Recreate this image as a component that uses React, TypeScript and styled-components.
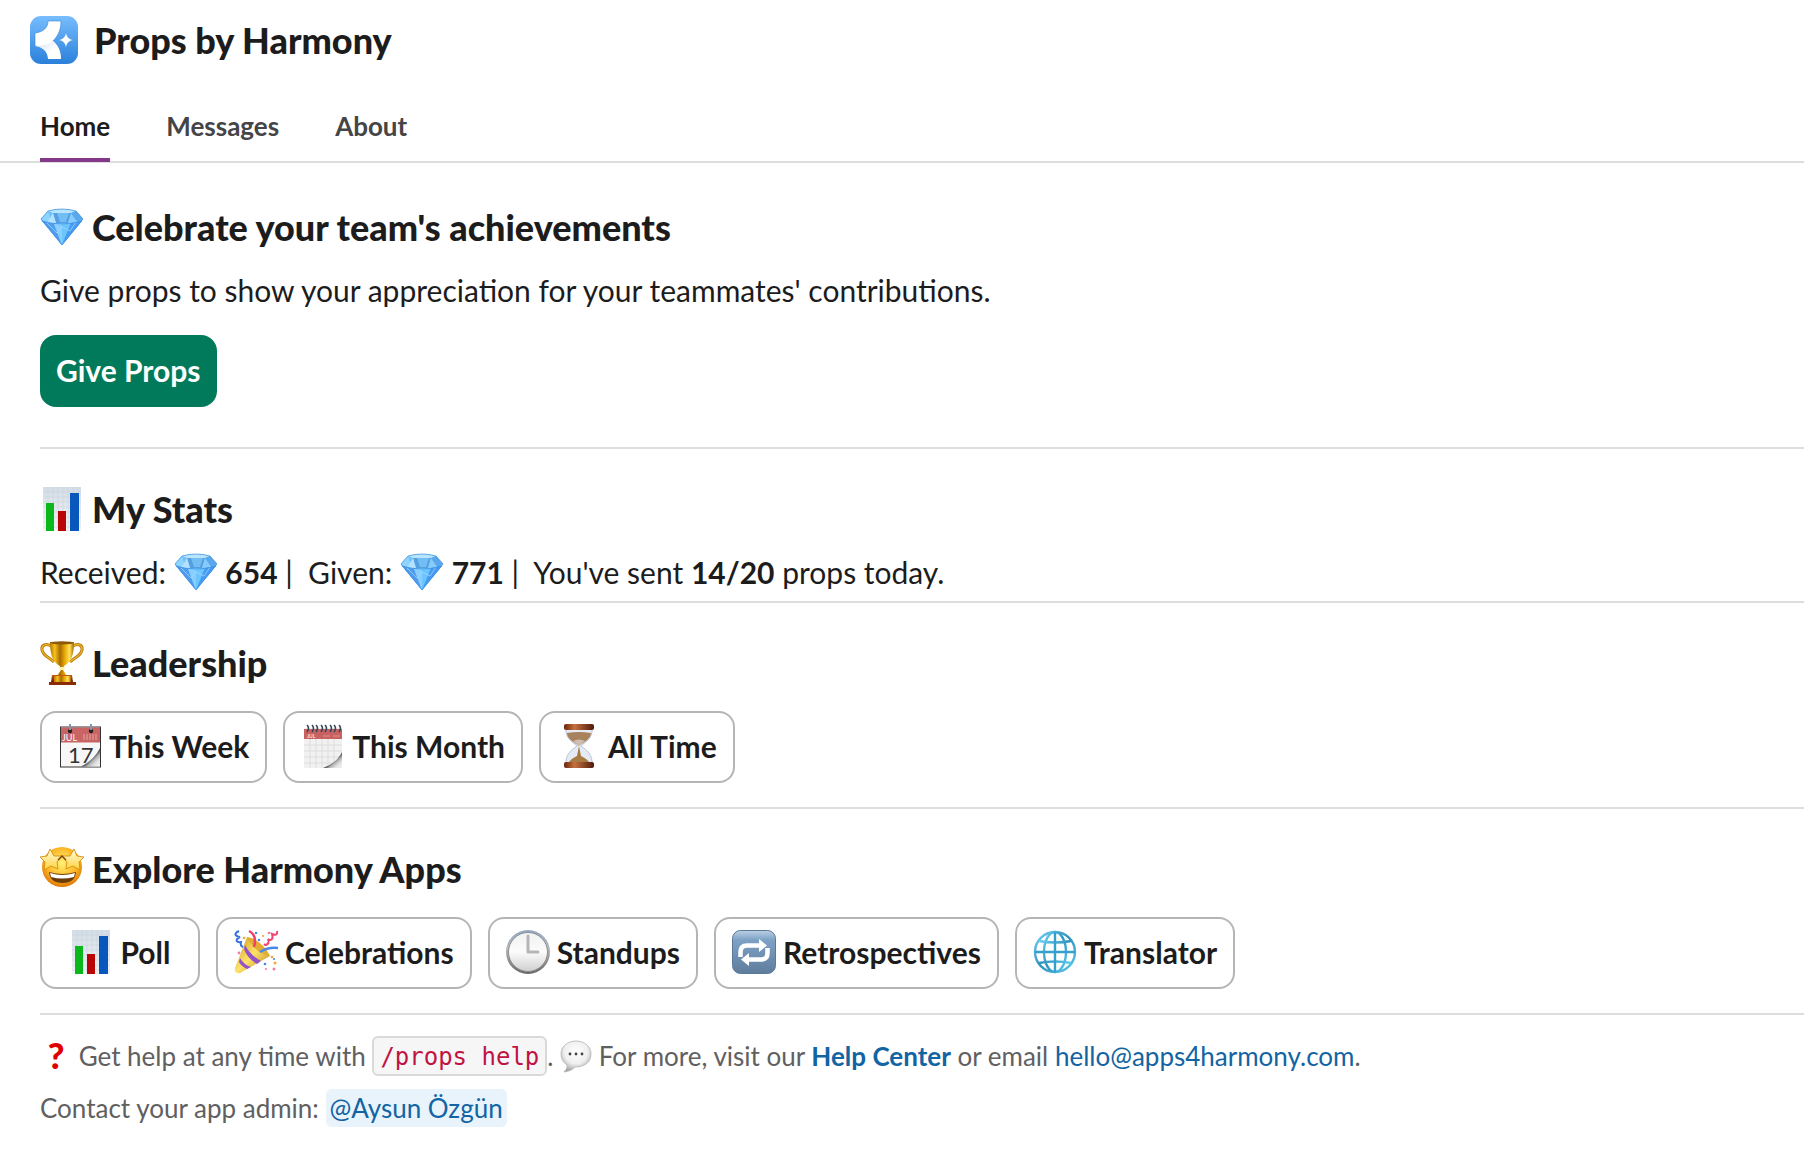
import React from "react";
import styled, { createGlobalStyle, css } from "styled-components";

const GlobalStyle = createGlobalStyle`
  *, *::before, *::after { box-sizing: border-box; }
  body {
    margin: 0;
    background: #ffffff;
    color: #1d1c1d;
    font-family: Lato, "Open Sans", sans-serif;
    font-size: 30px;
    line-height: 44px;
  }
`;

const headingType = css`
  font-family: "Lato Black", Lato, "Open Sans", sans-serif;
  font-size: 36px;
  font-weight: 900;
  line-height: 44px;
`;

/* ---------- layout ---------- */

const Page = styled.div`
  display: flex;
  flex-direction: column;
`;

const Header = styled.header`
  display: flex;
  align-items: center;
  gap: 16px;
  padding: 16px 30px;
`;

const AppTitle = styled.h1`
  margin: 0;
  ${headingType}
`;

const Tabs = styled.nav`
  display: flex;
  gap: 56px;
  padding: 26px 40px 0;
  border-bottom: 2px solid #dddddd;
`;

const Tab = styled.a<{ $active?: boolean }>`
  margin-bottom: -1px;
  padding-bottom: 12px;
  border-bottom: 4px solid ${(p) => (p.$active ? "#83388a" : "transparent")};
  color: ${(p) => (p.$active ? "#1d1c1d" : "#454447")};
  font-size: 26px;
  font-weight: 700;
  line-height: 40px;
  text-decoration: none;
`;

const Content = styled.main`
  display: flex;
  flex-direction: column;
  padding: 4px 0 40px 40px;
`;

const Section = styled.section<{ $end: number }>`
  display: flex;
  flex-direction: column;
  align-items: flex-start;
  padding: 38px 40px ${(p) => p.$end}px 0;
`;

const Divider = styled.hr`
  width: 100%;
  height: 2px;
  margin: 0;
  border: 0;
  background: #dddddd;
`;

const Heading = styled.h2`
  display: flex;
  align-items: center;
  gap: 8px;
  margin: 0;
  ${headingType}
`;

const Text = styled.p`
  margin: 19px 0 0;
`;

const Actions = styled.div<{ $top: number }>`
  display: flex;
  flex-wrap: wrap;
  gap: 16px;
  margin-top: ${(p) => p.$top}px;
`;

const primaryButton = css`
  border-color: #007a5a;
  background: #007a5a;
  color: #ffffff;
  padding: 0 14px 2px;
`;

const Button = styled.button<{ $primary?: boolean }>`
  display: flex;
  align-items: center;
  justify-content: center;
  gap: 7px;
  height: 72px;
  min-width: 160px;
  padding: 0 16px 2px;
  border: 2px solid #b5b5b5;
  border-radius: 16px;
  background: #ffffff;
  color: #1d1c1d;
  font: inherit;
  font-weight: 700;
  cursor: pointer;
  ${(p) => p.$primary && primaryButton}
`;

const Context = styled.footer`
  display: flex;
  flex-direction: column;
  gap: 12px;
  padding: 21px 40px 0 0;
  color: #616061;
  font-size: 26px;
  line-height: 40px;
`;

const ContextLine = styled.p`
  margin: 0;
`;

const Code = styled.code`
  display: inline-block;
  height: 40px;
  padding: 0 6px;
  border: 2px solid #d9d9d9;
  border-radius: 6px;
  background: #f6f6f6;
  color: #c01343;
  font-family: "DejaVu Sans Mono", monospace;
  font-size: 24px;
  line-height: 38px;
  vertical-align: bottom;
`;

const Link = styled.a<{ $strong?: boolean }>`
  color: #1264a3;
  font-weight: ${(p) => (p.$strong ? 700 : 400)};
  text-decoration: none;
`;

const Mention = styled(Link)`
  display: inline-block;
  height: 38px;
  padding: 0 4px;
  border-radius: 6px;
  background: #e8f3fc;
  line-height: 38px;
`;

/* ---------- icons ---------- */

const Logo = styled.svg`
  flex: none;
  width: 48px;
  height: 48px;
`;

const Glyph = styled.svg<{ $size: number }>`
  flex: none;
  width: ${(p) => p.$size}px;
  height: ${(p) => p.$size}px;
  overflow: visible;
  vertical-align: ${(p) => (p.$size > 32 ? "top" : "-6px")};
`;

type EmojiProps = { children: React.ReactNode; label: string; size?: number };

const Emoji = ({ children, label, size = 44 }: EmojiProps) => (
  <Glyph $size={size} viewBox={`0 0 ${size} ${size}`} role="img" aria-label={label}>
    {children}
  </Glyph>
);

const Gradients = () => (
  <Glyph $size={0} aria-hidden="true">
    <defs>
      <linearGradient id="gold" x1="0" x2="1" y1="0" y2="0">
        <stop offset="0" stopColor="#b97400" />
        <stop offset=".2" stopColor="#f5c21c" />
        <stop offset=".42" stopColor="#a86a00" />
        <stop offset=".62" stopColor="#e9ab08" />
        <stop offset=".82" stopColor="#ffe45c" />
        <stop offset="1" stopColor="#a96300" />
      </linearGradient>
      <linearGradient id="wood" x1="0" x2="0" y1="0" y2="1">
        <stop offset="0" stopColor="#c65a1e" />
        <stop offset="1" stopColor="#6b1f06" />
      </linearGradient>
      <linearGradient id="cap" x1="0" x2="1" y1="0" y2="0">
        <stop offset="0" stopColor="#6a2508" />
        <stop offset=".35" stopColor="#c4713f" />
        <stop offset="1" stopColor="#50190a" />
      </linearGradient>
      <radialGradient id="face" cx=".5" cy=".4" r=".62">
        <stop offset="0" stopColor="#fff176" />
        <stop offset=".6" stopColor="#fdb827" />
        <stop offset="1" stopColor="#dc7204" />
      </radialGradient>
      <linearGradient id="star" x1="0" x2="0" y1="0" y2="1">
        <stop offset="0" stopColor="#fffbe0" />
        <stop offset="1" stopColor="#ffd43a" />
      </linearGradient>
      <linearGradient id="chart" x1="0" x2="0" y1="0" y2="1">
        <stop offset="0" stopColor="#d3dde6" />
        <stop offset="1" stopColor="#f2f4f6" />
      </linearGradient>
      <linearGradient id="curl" x1="0" x2="1" y1="0" y2="1">
        <stop offset="0" stopColor="#5c5c5c" />
        <stop offset=".56" stopColor="#5c5c5c" />
        <stop offset=".66" stopColor="#b4b4b4" />
        <stop offset=".8" stopColor="#e2e2e2" />
        <stop offset="1" stopColor="#f2f2f2" />
      </linearGradient>
      <linearGradient id="rim" x1="0" x2="0" y1="0" y2="1">
        <stop offset="0" stopColor="#8fa5c2" />
        <stop offset=".4" stopColor="#b9b9bb" />
        <stop offset="1" stopColor="#666666" />
      </linearGradient>
      <linearGradient id="dial" x1="0" x2="0" y1="0" y2="1">
        <stop offset="0" stopColor="#f2f2f2" />
        <stop offset=".5" stopColor="#fbfbfb" />
        <stop offset="1" stopColor="#cfcfcf" />
      </linearGradient>
      <linearGradient id="tile" x1="0" x2="0" y1="0" y2="1">
        <stop offset="0" stopColor="#bcd0e4" />
        <stop offset=".22" stopColor="#7da2c6" />
        <stop offset="1" stopColor="#5f7c9c" />
      </linearGradient>
      <linearGradient id="ocean" x1="0" x2="1" y1="0" y2="1">
        <stop offset="0" stopColor="#6fd0f2" />
        <stop offset=".5" stopColor="#2f93bd" />
        <stop offset="1" stopColor="#5ccbf0" />
      </linearGradient>
      <linearGradient id="cone" x1="0" x2="1" y1="0" y2="1">
        <stop offset="0" stopColor="#c8961c" />
        <stop offset=".5" stopColor="#ffe268" />
        <stop offset="1" stopColor="#b47a12" />
      </linearGradient>
      <radialGradient id="bubble" cx=".5" cy=".35" r=".65">
        <stop offset="0" stopColor="#ffffff" />
        <stop offset=".6" stopColor="#efefef" />
        <stop offset="1" stopColor="#a2a2a2" />
      </radialGradient>
    </defs>
  </Glyph>
);

const AppLogo = () => (
  <Logo viewBox="0 0 48 48" role="img" aria-label="Props">
    <defs>
      <linearGradient id="logoBg" x1="0" x2="0" y1="0" y2="1">
        <stop offset="0" stopColor="#77bdff" />
        <stop offset="1" stopColor="#2a80da" />
      </linearGradient>
      <linearGradient id="logoFold" x1="0" x2="1" y1="0" y2="1">
        <stop offset="0" stopColor="#c9dff5" />
        <stop offset=".6" stopColor="#ffffff" />
      </linearGradient>
    </defs>
    <rect width="48" height="48" rx="11" fill="url(#logoBg)" />
    <path
      d="M18 5H31C31 14 28 20 23 25C28 29 31 35 31 43H18C18 36 13 31 5 30V17C13 16 18 12 18 5Z"
      fill="#ffffff"
      stroke="#2f86dc"
      strokeOpacity=".6"
    />
    <path d="M5 30C13 30 19 28 23 25C28 29 31 35 31 43H18C18 36 13 31 5 30Z" fill="url(#logoFold)" />
    <path
      d="M36 16C37 21 38.500 23 43.500 24C38.500 25 37 27 36 32C35 27 33.500 25 28.500 24C33.500 23 35 21 36 16Z"
      fill="#ffffff"
      stroke="#2f86dc"
      strokeOpacity=".35"
    />
  </Logo>
);

const Gem = () => (
  <Emoji label="gem">
    <path d="M1 14L8 6Q22 2 36 6L43 14L22 40Z" fill="#6fc1fb" />
    <path d="M1 14L8 6L12 18L2 17Z" fill="#8fd3ff" />
    <path d="M8 6Q22 2 36 6L31 8H13Z" fill="#b9e4fd" />
    <path d="M13 8H31L28 18H16Z" fill="#559fe0" />
    <path d="M17 8H29L26 17H20Z" fill="#72bdf4" />
    <path d="M13 8L16 18H7Z" fill="#b4e1ff" />
    <path d="M31 8L28 18H38Z" fill="#86cbfb" />
    <path d="M36 6L43 14L38 18L31 8Z" fill="#5ba7ec" />
    <path d="M2 16Q22 22 42 16L22 40Z" fill="#66bbfc" />
    <path d="M2 16L14 19L22 40Z" fill="#4f9cee" />
    <path d="M14 19H22V40Z" fill="#88ceff" />
    <path d="M22 19L31 18L22 40Z" fill="#6cc5fd" />
    <path d="M31 18L42 16L22 40Z" fill="#479af2" />
    <path d="M7 18L17 28L22 22L30 26L36 17" fill="none" stroke="#a5dcff" strokeWidth="1" opacity=".7" />
    <path d="M1 14L8 6Q22 2 36 6L43 14L22 40ZM2 16Q22 22 42 16" fill="none" stroke="#3a8ee0" strokeWidth=".7" />
  </Emoji>
);

const Chart = () => (
  <Emoji label="bar chart">
    <rect x="3" width="38" height="44" fill="url(#chart)" />
    <path d="M8 0V44M13 0V44M18 0V44M23 0V44M28 0V44M33 0V44M38 0V44M3 5H41M3 10H41M3 15H41M3 20H41M3 25H41M3 30H41M3 35H41M3 40H41" stroke="#c3ccd5" strokeWidth=".4" />
    <rect x="6" y="16" width="8" height="28" fill="#0bb81c" />
    <rect x="18" y="24" width="8" height="20" fill="#b90505" />
    <rect x="30" y="6" width="9" height="38" fill="#0757bd" />
  </Emoji>
);

const Trophy = () => (
  <Emoji label="trophy">
    <path d="M11 5C6 2 1 4 2 9C3 15 9 16 14 21M33 5C38 2 43 4 42 9C41 15 35 16 30 21" fill="none" stroke="#b8780a" strokeWidth="3" />
    <path d="M11 5C6 2 1 4 2 9C3 15 9 16 14 21M33 5C38 2 43 4 42 9C41 15 35 16 30 21" fill="none" stroke="#efbd2e" strokeWidth="1.200" />
    <path d="M10 1H34C34 12 32 21 24 25L23 29L27 35H17L21 29L20 25C12 21 10 12 10 1Z" fill="url(#gold)" />
    <ellipse cx="22" cy="1.800" rx="12" ry="1.600" fill="#8a5a06" />
    <path d="M19 26H25L24 29H20Z" fill="#fff0a0" />
    <path d="M12 34H32L33 41H11Z" fill="url(#wood)" />
    <rect x="9" y="41" width="27" height="3" fill="#8b2c07" />
    <rect x="14" y="35" width="17" height="6" fill="url(#gold)" />
  </Emoji>
);

const CalendarDay = () => (
  <Emoji label="calendar">
    <rect x="2.500" y="3" width="40" height="40" fill="#f7f7f7" stroke="#333333" />
    <rect x="3" y="3.500" width="39" height="15" fill="#c86464" />
    <path d="M26 10V16M29 10V16M32 10V16M35 10V16M38 10V16" stroke="#e09a9a" strokeWidth="1.200" />
    <text x="4" y="17" fontFamily="Lato" fontSize="9" fontWeight="400" fill="#ffffff">JUL</text>
    <text x="10" y="39" fontFamily="Lato" fontSize="22" fontWeight="400" fill="#333333">17</text>
    <path d="M42 24Q36 36 23 42.500H42Z" fill="url(#curl)" />
    <circle cx="12" cy="7" r="2.200" fill="#222222" />
    <circle cx="33" cy="7" r="2.200" fill="#222222" />
    <path d="M12 0V6M33 0V6" stroke="#8296ab" strokeWidth="2" />
  </Emoji>
);

const CalendarPad = () => (
  <Emoji label="spiral calendar">
    <rect x="3" y="4" width="38" height="40" fill="#f1f1f1" />
    <path d="M9 15V44M15 15V44M21 15V44M27 15V44M33 15V44M3 21H41M3 27H41M3 33H41M3 39H41" stroke="#dddddd" />
    <rect x="3" y="5" width="38" height="10" fill="#c96161" />
    <text x="6" y="14" fontFamily="Lato" fontSize="5" fontWeight="400" fill="#ffffff">JUL</text>
    <path d="M22 12H29M32 12H39" stroke="#dc9292" />
    <path d="M41 28Q36 39 22 44H41Z" fill="url(#curl)" />
    {[6, 11, 15, 20, 24, 29, 33, 38].map((x) => (
      <path key={x} d={`M${x} 1Q${x + 3} 4 ${x} 8`} fill="none" stroke="#37485a" strokeWidth="1.600" />
    ))}
  </Emoji>
);

const Hourglass = () => (
  <Emoji label="hourglass">
    <path d="M9 4C8 15 16 18 20 22C14 26 8 31 9 41H35C36 31 30 26 24 22C28 18 36 15 35 4Z" fill="#e4ebf5" stroke="#b9c3d6" />
    <path d="M10 9Q22 7 34 9C34 15 27 18 22 22C17 18 10 15 10 9Z" fill="#a8825c" />
    <path d="M16 17Q22 14 28 17L22 22Z" fill="#cdbcb0" />
    <path d="M22 22L24 32Q31 35 33 40H11Q13 35 20 32Z" fill="#a87b45" />
    <rect x="7" y="0" width="30" height="6" rx="2" fill="url(#cap)" />
    <rect x="7" y="38" width="30" height="6" rx="2" fill="url(#cap)" />
  </Emoji>
);

const StarFace = () => (
  <Emoji label="star-struck">
    <circle cx="22" cy="20" r="20" fill="url(#face)" />
    <path d="M9 25Q22 29 36 25Q35 36 22.500 36Q10 36 9 25Z" fill="#6c3b0a" />
    <path d="M10 26Q22 30 35 26L34 30Q22 33 11 30Z" fill="#ffffff" />
    <path d="M10 2L14 9L22 9L17 15L18 22L11 19L4 23L5 15L0 10L7 9Z" fill="url(#star)" stroke="#d68d10" strokeWidth=".9" />
    <path d="M34 2L37 9L44 10L39 15L40 23L33 19L26 22L27 15L22 9L30 9Z" fill="url(#star)" stroke="#d68d10" strokeWidth=".9" />
    <path d="M18 13L22 9L26 13" fill="none" stroke="#78420a" strokeWidth="1.400" />
  </Emoji>
);

const Party = () => (
  <Emoji label="party popper">
    <path d="M13 7Q28 12 36 26L6 43Q0 44 1 38Z" fill="url(#cone)" />
    <path d="M11 15Q17 26 27 31L23 34Q13 28 10 19ZM6 28Q10 35 17 37L13 39Q7 36 5 32Z" fill="#9352c8" />
    <path d="M13 7Q28 10 36 26Q22 24 13 7Z" fill="#e3ac34" />
    <path d="M20 17C22 10 21 4 15 1" fill="none" stroke="#ef4168" strokeWidth="2.500" />
    <path d="M26 22Q34 17 44 18" fill="none" stroke="#4789ea" strokeWidth="2.500" />
    <path d="M5 1C-2 4 3 7 6 7C0 10 3 13 7 12Q6 16 9 17" fill="none" stroke="#3471dc" strokeWidth="2" />
    <path d="M43 1C44 6 40 5 38 4C40 10 36 11 34 9C36 14 32 16 30 14" fill="none" stroke="#ef4771" strokeWidth="2" />
    <g fill="#418af0">
      <circle cx="22" cy="3" r="1.300" /><circle cx="25" cy="10" r="1.300" /><circle cx="31" cy="34" r="1.300" /><circle cx="40" cy="29" r="1.100" />
    </g>
    <g fill="#f6a245">
      <circle cx="10" cy="8" r="1.300" /><circle cx="38" cy="27" r="1.300" /><circle cx="41" cy="33" r="1.500" /><circle cx="29" cy="6" r="1.100" />
    </g>
    <g fill="#f27ba4">
      <circle cx="5" cy="23" r="1.400" /><circle cx="35" cy="3" r="1.300" /><circle cx="40" cy="39" r="1.500" /><circle cx="32" cy="39" r="1" />
    </g>
  </Emoji>
);

const Clock = () => (
  <Emoji label="clock">
    <circle cx="22" cy="22" r="22" fill="url(#rim)" />
    <circle cx="22" cy="22" r="19.500" fill="url(#dial)" stroke="#8f8f93" />
    <path d="M22 6V22H32" fill="none" stroke="#b5b5b7" strokeWidth="3" strokeLinecap="round" strokeLinejoin="round" />
  </Emoji>
);

const Repeat = () => (
  <Emoji label="repeat">
    <rect x=".5" y=".5" width="43" height="43" rx="8" fill="url(#tile)" stroke="#5a7898" />
    <path d="M8.500 27V22Q8.500 15.500 15 15.500H28M35.500 18V23Q35.500 29.500 29 29.500H16" fill="none" stroke="#ffffff" strokeWidth="4.500" />
    <path d="M27 9L35 15.500L27 22ZM17 23L9 29.500L17 36Z" fill="#ffffff" />
  </Emoji>
);

const Globe = () => (
  <Emoji label="globe">
    <g fill="none" stroke="url(#ocean)" strokeWidth="2.400">
      <circle cx="22" cy="22" r="20" />
      <ellipse cx="22" cy="22" rx="11" ry="20" />
      <path d="M6 11Q22 14 38 11M6 33Q22 30 38 33" />
    </g>
    <path d="M2 22H42M22 2V42" stroke="#35a0cb" strokeWidth="2.400" />
  </Emoji>
);

const Question = () => (
  <Emoji label="question" size={32}>
    <text x="16" y="29" textAnchor="middle" fontFamily="Lato" fontWeight="900" fontSize="36" fill="#e00000">?</text>
  </Emoji>
);

const Speech = () => (
  <Emoji label="speech" size={32}>
    <path d="M16 1C24 1 31 6 31 14C31 22 25 27 15 27Q12 31 4 32Q8 28 7 25Q1 21 1 14C1 6 8 1 16 1Z" fill="url(#bubble)" stroke="#b4b4b4" strokeWidth=".8" />
    <circle cx="10" cy="14" r="1.400" fill="#444444" />
    <circle cx="16" cy="14" r="1.400" fill="#444444" />
    <circle cx="22" cy="14" r="1.400" fill="#444444" />
  </Emoji>
);

/* ---------- data ---------- */

const tabs = ["Home", "Messages", "About"];

const periods = [
  { label: "This Week", Icon: CalendarDay },
  { label: "This Month", Icon: CalendarPad },
  { label: "All Time", Icon: Hourglass },
];

const apps = [
  { label: "Poll", Icon: Chart },
  { label: "Celebrations", Icon: Party },
  { label: "Standups", Icon: Clock },
  { label: "Retrospectives", Icon: Repeat },
  { label: "Translator", Icon: Globe },
];

export default function App() {
  return (
    <Page>
      <GlobalStyle />
      <Gradients />
      <Header>
        <AppLogo />
        <AppTitle>Props by Harmony</AppTitle>
      </Header>
      <Tabs>
        {tabs.map((name, i) => (
          <Tab key={name} href={`#${name.toLowerCase()}`} $active={i === 0}>
            {name}
          </Tab>
        ))}
      </Tabs>
      <Content>
        <Section $end={40}>
          <Heading><Gem />Celebrate your team's achievements</Heading>
          <Text>Give props to show your appreciation for your teammates' contributions.</Text>
          <Actions $top={23}>
            <Button type="button" $primary>Give Props</Button>
          </Actions>
        </Section>
        <Divider />
        <Section $end={7}>
          <Heading><Chart />My Stats</Heading>
          <Text>
            Received: <Gem /> <b>654</b> |{"\u00a0 "}Given: <Gem /> <b>771</b> |{"\u00a0 "}You've sent{" "}
            <b>14/20</b> props today.
          </Text>
        </Section>
        <Divider />
        <Section $end={24}>
          <Heading><Trophy />Leadership</Heading>
          <Actions $top={26}>
            {periods.map(({ label, Icon }) => (
              <Button type="button" key={label}><Icon />{label}</Button>
            ))}
          </Actions>
        </Section>
        <Divider />
        <Section $end={24}>
          <Heading><StarFace />Explore Harmony Apps</Heading>
          <Actions $top={26}>
            {apps.map(({ label, Icon }) => (
              <Button type="button" key={label}><Icon />{label}</Button>
            ))}
          </Actions>
        </Section>
        <Divider />
        <Context>
          <ContextLine>
            <Question /> Get help at any time with <Code>/props help</Code>. <Speech /> For more, visit our{" "}
            <Link href="#help" $strong>Help Center</Link> or email{" "}
            <Link href="mailto:hello@apps4harmony.com">hello@apps4harmony.com</Link>.
          </ContextLine>
          <ContextLine>
            Contact your app admin: <Mention href="#admin">@Aysun Özgün</Mention>
          </ContextLine>
        </Context>
      </Content>
    </Page>
  );
}
